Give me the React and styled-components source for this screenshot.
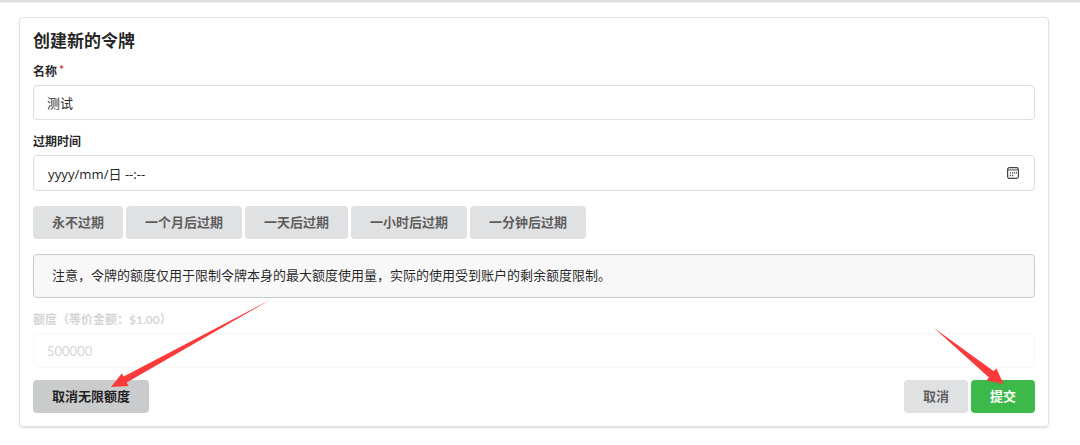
import React, { useState } from "react";
import styled, { createGlobalStyle } from "styled-components";

const GlobalStyle = createGlobalStyle`
  *, *::before, *::after { box-sizing: border-box; }
  body {
    margin: 0;
    background: #fff;
    color: rgba(0, 0, 0, 0.87);
    font-family: Lato, "Noto Sans CJK SC", sans-serif;
    font-size: 13px;
  }
`;

const Page = styled.div`
  border-top: 2px solid #dedede;
  box-shadow: inset 0 1px 0 #f3f3f3;
  padding: 15px 31px 17px 19px;
`;

const Card = styled.main`
  border: 1px solid #e2e3e3;
  border-radius: 4px;
  box-shadow: 0 1px 2px rgba(34, 36, 38, 0.15);
  padding: 12px 13px 13px;
`;

const Title = styled.h1`
  margin: 0 0 12px;
  font-size: 17px;
  line-height: 22px;
  font-weight: 700;
`;

const Field = styled.div`
  margin-bottom: ${(p) => p.$gap}px;
  opacity: ${(p) => (p.$faded ? 0.2 : 1)};
`;

const Label = styled.label`
  display: block;
  margin-bottom: 6px;
  font-size: 12px;
  line-height: 15px;
  font-weight: 700;
`;

const Required = styled.span`
  margin-left: 2px;
  color: #db2828;
  font-size: 12px;
  line-height: 1;
  vertical-align: 2px;
`;

const InputBox = styled.div`
  display: flex;
  align-items: center;
  height: ${(p) => p.$height}px;
  padding: 0 15px 0 13px;
  border: 1px solid #dededf;
  border-radius: 4px;
`;

const Input = styled.input`
  flex: 1;
  min-width: 0;
  padding: ${(p) => (p.$date ? "0 1px" : "0")};
  border: 0;
  outline: 0;
  background: transparent;
  color: inherit;
  font: inherit;
  font-family: ${(p) =>
    p.$date ? '"Noto Sans", "Noto Sans CJK SC", sans-serif' : "inherit"};
`;

const PickerButton = styled.button`
  display: flex;
  padding: 0;
  border: 0;
  background: none;
  color: #444;
`;

const Presets = styled.div`
  display: flex;
  flex-wrap: wrap;
  gap: 3px;
  margin-bottom: 15px;
`;

const tones = {
  plain: ["#e0e1e2", "rgba(0, 0, 0, 0.6)"],
  active: ["#cacbcd", "rgba(0, 0, 0, 0.85)"],
  positive: ["#3cb94a", "#fff"],
};

const Button = styled.button`
  height: 33px;
  padding: 0 19px 2px;
  border: 0;
  border-radius: 4px;
  background: ${(p) => tones[p.$tone || "plain"][0]};
  color: ${(p) => tones[p.$tone || "plain"][1]};
  font: inherit;
  font-weight: 700;
  line-height: 16px;
  white-space: nowrap;
  cursor: pointer;
`;

const Message = styled.p`
  margin: 0 0 14px;
  padding: 11px 18px 13px;
  border: 1px solid #c9caca;
  border-radius: 4px;
  background: #f8f8f9;
  line-height: 18px;
`;

const Footer = styled.div`
  display: flex;
  justify-content: space-between;
`;

const Actions = styled.div`
  display: flex;
  gap: 3px;
`;

const Pointed = styled.div`
  position: relative;
`;

const Arrow = styled.svg`
  position: absolute;
  left: ${(p) => p.$left}px;
  bottom: ${(p) => p.$bottom}px;
  fill: #fb3b3b;
  pointer-events: none;
`;

const presets = ["永不过期", "一个月后过期", "一天后过期", "一小时后过期", "一分钟后过期"];

function CalendarIcon() {
  return (
    <svg width="12" height="12" viewBox="0 0 12 12" aria-hidden="true">
      <rect x="0.6" y="0.6" width="10.8" height="10.8" rx="1.8" fill="none" stroke="currentColor" strokeWidth="1.2" />
      <path d="M1 2h10v1.8H1z" fill="currentColor" opacity="0.55" />
      <path
        d="M5 5.2h1.2v1.4H5zM7 5.2h1.2v1.4H7zM9 5.2h1v1.4H9zM2.8 5.2h1.2v1.4H2.8zM2.8 7.8h1.2v1.4H2.8zM5 7.8h1.2v1.4H5z"
        fill="currentColor"
      />
    </svg>
  );
}

export default function App() {
  const [name, setName] = useState("测试");
  const [expires, setExpires] = useState("yyyy/mm/日 --:--");

  return (
    <>
      <GlobalStyle />
      <Page>
        <Card>
          <Title>创建新的令牌</Title>
          <Field $gap={14}>
            <Label htmlFor="name">
              名称<Required>*</Required>
            </Label>
            <InputBox $height={35}>
              <Input id="name" required value={name} onChange={(e) => setName(e.target.value)} />
            </InputBox>
          </Field>
          <Field $gap={15}>
            <Label htmlFor="expires">过期时间</Label>
            <InputBox $height={36}>
              <Input id="expires" $date value={expires} onChange={(e) => setExpires(e.target.value)} />
              <PickerButton type="button" aria-label="选择日期">
                <CalendarIcon />
              </PickerButton>
            </InputBox>
          </Field>
          <Presets>
            {presets.map((text) => (
              <Button key={text} type="button">{text}</Button>
            ))}
          </Presets>
          <Message>注意，令牌的额度仅用于限制令牌本身的最大额度使用量，实际的使用受到账户的剩余额度限制。</Message>
          <Field $gap={12} $faded>
            <Label htmlFor="quota">额度（等价金额：$1.00）</Label>
            <InputBox $height={35}>
              <Input id="quota" readOnly value="500000" />
            </InputBox>
          </Field>
          <Footer>
            <Pointed>
              <Button type="button" $tone="active">取消无限额度</Button>
              <Arrow $left={78} $bottom={25} width="160" height="88" viewBox="0 0 160 88" aria-hidden="true">
                <path d="M159 0L12.7 76.5L10.7 73.5L0 87L17.7 86L15.7 82.5Z" />
              </Arrow>
            </Pointed>
            <Actions>
              <Button type="button">取消</Button>
              <Pointed>
                <Button type="submit" $tone="positive">提交</Button>
                <Arrow $left={-37} $bottom={29} width="70" height="56" viewBox="0 0 70 56" aria-hidden="true">
                  <path d="M0 0L59.5 43L62.5 40.5L69.5 56L52.5 52.5L55 49.5Z" />
                </Arrow>
              </Pointed>
            </Actions>
          </Footer>
        </Card>
      </Page>
    </>
  );
}
